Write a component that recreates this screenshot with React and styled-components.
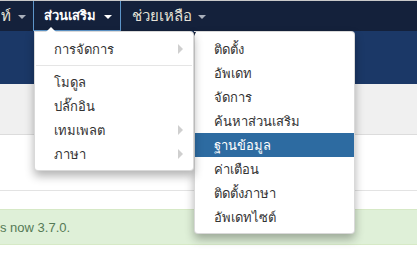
import React from 'react'
import styled, { createGlobalStyle } from 'styled-components'

const GlobalStyle = createGlobalStyle`
  html, body { margin: 0; padding: 0; background: #fff; }
  body { font-family: "Noto Sans", "DejaVu Sans", sans-serif; overflow: hidden; }
`

const Page = styled.div`
  width: 417px;
  height: 257px;
  position: relative;
  overflow: hidden;
  border-top: 1px solid #c9c9c9;
  box-sizing: border-box;
`

const Navbar = styled.div`
  height: 30px;
  background: #14213b;
  display: flex;
  align-items: stretch;
  position: relative;
  z-index: 5;
`

const NavItem = styled.div`
  position: relative;
  display: flex;
  align-items: center;
  padding: 0 0 0 ${p => p.padLeft || 10}px;
  margin-left: ${p => p.offset || 0}px;
  box-sizing: border-box;
  width: ${p => p.w}px;
  border: 1px solid ${p => p.active ? '#5d95c9' : 'transparent'};
  border-top: none;
  color: ${p => p.active ? '#fff' : '#e4e0d6'};
  font-size: ${p => p.active ? 13 : 15}px;
  font-weight: ${p => p.active ? 700 : 400};
  white-space: nowrap;
`

const Caret = styled.span`
  display: inline-block;
  width: 0;
  height: 0;
  margin-left: ${p => p.gap || 7}px;
  margin-top: 2px;
  border-left: 4px solid transparent;
  border-right: 4px solid transparent;
  border-top: 4px solid ${p => p.light ? '#fff' : '#a9b0bb'};
`

const Subhead = styled.div`
  height: 53px;
  background: #1b3867;
`

const Toolbar = styled.div`
  height: 50px;
  background: #f0f0f0;
  border-bottom: 1px solid #dcdcdc;
`

const Gap = styled.div`
  height: ${p => p.h}px;
  border-bottom: ${p => p.line ? '1px solid #e3e3e3' : 'none'};
`

const Alert = styled.div`
  height: 34px;
  background: #dff0d8;
  border-top: 1px solid #d6e9c6;
  border-bottom: 1px solid #d6e9c6;
  color: #557a55;
  font-family: "Liberation Sans", Arial, sans-serif;
  font-size: 13px;
  display: flex;
  align-items: center;
`

const Menu = styled.div`
  position: absolute;
  top: 30px;
  left: ${p => p.left}px;
  width: ${p => p.w}px;
  background: #fff;
  border: 1px solid rgba(0, 0, 0, 0.15);
  border-radius: 0 4px 4px 4px;
  box-shadow: 0 5px 10px rgba(0, 0, 0, 0.3);
  padding: 5px 0 4px;
  box-sizing: border-box;
  font-size: 13px;
  font-weight: 400;
  z-index: ${p => p.z || 10};
`

const UpArrow = styled.span`
  position: absolute;
  top: -5px;
  left: 11px;
  width: 0;
  height: 0;
  border-left: 5px solid transparent;
  border-right: 5px solid transparent;
  border-bottom: 5px solid #fff;
`

const DownTick = styled.span`
  position: absolute;
  top: 0;
  left: -3px;
  width: 0;
  height: 0;
  border-left: 2px solid transparent;
  border-right: 2px solid transparent;
  border-top: 4px solid #14213b;
`

const Item = styled.div`
  height: 24px;
  display: flex;
  align-items: center;
  justify-content: space-between;
  padding: 0 10px 0 19px;
  color: ${p => p.active ? '#fff' : '#333'};
  background: ${p => p.active ? '#2d6ba1' : 'transparent'};
  white-space: nowrap;
`

const SubArrow = styled.span`
  width: 0;
  height: 0;
  border-top: 5px solid transparent;
  border-bottom: 5px solid transparent;
  border-left: 5px solid #cfcfcf;
`

const Divider = styled.div`
  height: 1px;
  margin: 4px 1px;
  background: #e5e5e5;
`

const firstMenu = [
  { label: 'การจัดการ', sub: true },
  { divider: true },
  { label: 'โมดูล' },
  { label: 'ปลั๊กอิน' },
  { label: 'เทมเพลต', sub: true },
  { label: 'ภาษา', sub: true },
]

const secondMenu = [
  'ติดตั้ง',
  'อัพเดท',
  'จัดการ',
  'ค้นหาส่วนเสริม',
  'ฐานข้อมูล',
  'ค่าเตือน',
  'ติดตั้งภาษา',
  'อัพเดทไซต์',
]

export default function App() {
  return (
    <>
      <GlobalStyle />
      <Page>
        <Navbar>
          <NavItem w={42} offset={-9} padLeft={9}>
            ท์<Caret />
          </NavItem>
          <NavItem w={88} active>
            ส่วนเสริม<Caret light gap={8} />
            <Menu left={0} w={160} z={11}>
              <UpArrow />
              {firstMenu.map((it, ix) => it.divider
                ? <Divider key={ix} />
                : <Item key={ix}>{it.label}{it.sub && <SubArrow />}</Item>)}
            </Menu>
            <Menu left={160} w={161}>
              <DownTick />
              {secondMenu.map((label, ix) =>
                <Item key={ix} active={label === 'ฐานข้อมูล'}>{label}</Item>)}
            </Menu>
          </NavItem>
          <NavItem w={95}>
            ช่วยเหลือ<Caret gap={6} />
          </NavItem>
        </Navbar>
        <Subhead />
        <Toolbar />
        <Gap h={55} line />
        <Gap h={18} />
        <Alert>s now 3.7.0.</Alert>
      </Page>
    </>
  )
}
